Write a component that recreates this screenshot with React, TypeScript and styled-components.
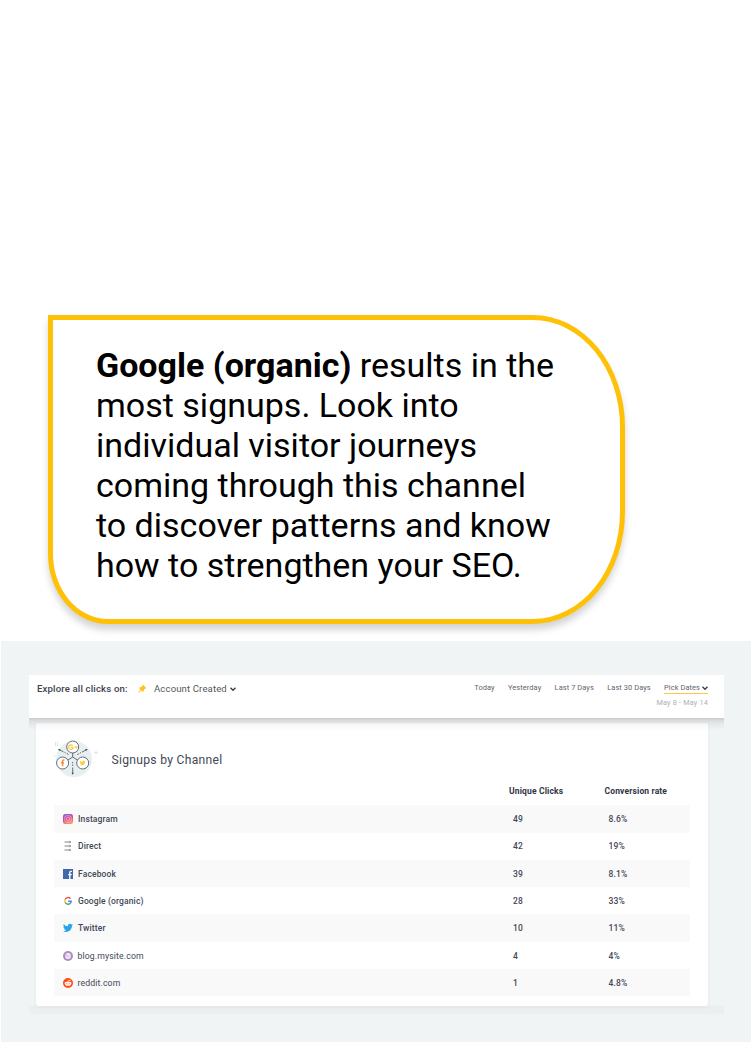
import React from "react";
import styled, { createGlobalStyle } from "styled-components";

const Global = createGlobalStyle`
  * { box-sizing: border-box; }
  body { margin: 0; background: #fff; font-family: Roboto, sans-serif; }
`;

const Page = styled.main`
  width: 751px;
  height: 1042px;
  overflow: hidden;
  padding-top: 315px;
`;

const Callout = styled.section`
  width: 577px;
  height: 309px;
  margin: 0 0 17px 47.5px;
  padding: 25px 0 0 43.5px;
  border: solid #ffc107;
  border-width: 5px;
  border-radius: 0 92px 92px 60px / 0 112px 112px 70px;
  background: #fff;
  box-shadow: 0 6px 7px rgba(0, 0, 0, 0.17);
`;

const Message = styled.p`
  margin: 0;
  color: #000;
  font-size: 34px;
  line-height: 40px;
  white-space: nowrap;
`;

const Line = styled.span`
  display: block;
`;

const Dashboard = styled.section`
  height: 401px;
  margin-left: 1px;
  padding: 34px 26.5px 0 28px;
  background: #f0f4f5;
`;

const Toolbar = styled.header`
  display: flex;
  justify-content: space-between;
  width: 695px;
  height: 43px;
  padding: 0 16px 0 8px;
  background: #fff;
`;

const Explore = styled.div`
  display: flex;
  align-items: center;
  height: 27px;
  color: #3c4350;
  font-size: 9.6px;
  white-space: nowrap;
`;

const ExploreLabel = styled.span`
  width: 100px;
  font-weight: 500;
  letter-spacing: 0.15px;
`;

const EventName = styled.span`
  width: 75.5px;
  margin-left: 7px;
  color: #555a62;
  font-size: 9.6px;
  letter-spacing: 0.11px;
`;

const Dates = styled.div`
  display: flex;
  flex-direction: column;
  align-items: flex-end;
  padding-top: 8px;
`;

const DateTabs = styled.nav`
  display: flex;
  gap: 13.3px;
`;

const DateTab = styled.span<{ $active?: boolean }>`
  display: flex;
  align-items: center;
  gap: 2px;
  height: 10px;
  box-shadow: ${(p) => (p.$active ? "0 1px 0 #ffc83d" : "none")};
  color: #62666e;
  font-size: 7.45px;
  line-height: 10px;
  letter-spacing: 0.08px;
  white-space: nowrap;
`;

const DateRange = styled.span`
  margin-top: 5px;
  color: #aeb0b4;
  font-size: 7.3px;
  line-height: 10px;
  letter-spacing: 0.18px;
`;

const Surface = styled.div`
  width: 695px;
  height: 296px;
  padding: 5px 0 0 7px;
  background: linear-gradient(#c9cccd 0, #dcdfe0 3px, #e8ebed 7px, #f0f4f5 12px, #f0f4f5 286px, #ebeef0 289px, #edf0f1 100%);
`;

const Card = styled.article`
  width: 672px;
  height: 282.5px;
  padding: 16px 18px 0;
  border-radius: 0 0 3px 3px;
  background: linear-gradient(#f1f1f1 0, #fafafa 3px, #fff 8px);
  box-shadow: 0 1px 3px rgba(60, 75, 85, 0.06);
`;

const CardHead = styled.div`
  display: flex;
  align-items: center;
  height: 42px;
`;

const CardTitle = styled.h2`
  margin: 0 0 0 12.5px;
  color: #414856;
  font-size: 12.1px;
  font-weight: 400;
  letter-spacing: 0.3px;
`;

const Row = styled.div<{ $striped?: boolean }>`
  display: grid;
  grid-template-columns: 10px 440px 95.5px 1fr;
  align-items: center;
  height: 27.28px;
  padding: 0.6px 0 0 9px;
  background: ${(p) => (p.$striped ? "#f9f9f9" : "transparent")};
  color: #414856;
  font-size: 8.5px;
  font-weight: 500;
  letter-spacing: 0.13px;
`;

const HeadRow = styled(Row)`
  height: 24.3px;
  padding-bottom: 5px;
  color: #2f3644;
  font-size: 8.5px;
  font-weight: 700;
  letter-spacing: 0.15px;
`;

const HeadCell = styled.span`
  margin-left: -4px;
`;

const Name = styled.span<{ $light?: boolean }>`
  padding-left: ${(p) => (p.$light ? 4.5 : 5)}px;
  font-weight: ${(p) => (p.$light ? 400 : 500)};
  font-size: ${(p) => (p.$light ? 8.7 : 8.5)}px;
`;

const Icon = styled.svg`
  display: block;
`;

const Chevron = ({ size = 6 }: { size?: number }) => (
  <Icon width={size} height={size} viewBox="0 0 6 6" fill="none" stroke="#343b49" strokeWidth="1.35">
    <path d="M.5 1.8 3 4.2 5.5 1.8" />
  </Icon>
);

const Pin = () => (
  <Icon width="10" height="10" viewBox="0 0 10 10" fill="#ffc21a">
    <path d="M5.7.5 9.5 4.3 8.3 4.5 6.7 6.1 6.3 8.3 4.5 6.5.5 9.5 3.5 5.5 1.7 3.7 3.9 3.3 5.5 1.7Z" />
  </Icon>
);

const birdPath =
  "M23 4.9a9 9 0 0 1-2.6.7 4.5 4.5 0 0 0 2-2.5 9 9 0 0 1-2.9 1.1 4.5 4.5 0 0 0-7.7 4.1A12.8 12.8 0 0 1 2.5 3.6a4.5 4.5 0 0 0 1.4 6 4.5 4.5 0 0 1-2-.6c0 2.2 1.5 4.1 3.6 4.5a4.5 4.5 0 0 1-2 .1 4.5 4.5 0 0 0 4.2 3.1A9 9 0 0 1 1 18.6a12.8 12.8 0 0 0 6.900 2c8.300 0 13.100-7 12.800-13.300A9 9 0 0 0 23 4.900Z";

const ChannelArt = () => (
  <Icon width="45" height="42" viewBox="0 0 45 42" fill="none">
    <circle cx="20" cy="20" r="18" fill="#e8eff1" />
    <path d="M1.500 3v4M3.500 3v4M42 11.500v4M40 13.500h4M39.500 23.500h1.500M0 17h2" stroke="#d9e0e5" strokeWidth=".8" />
    <g stroke="#555e68" strokeWidth=".9">
      <path d="M18.700 13.500v4.500M18.700 18l-5.500 3.500M18.700 18l5.500 3.500" />
      <path d="M5 10.500 9.500 12.900M10.500 13.400l1.200.6M12.700 14.500l1.800 1M32.500 10.700 28 13.100M27 13.600l-1.200.6M24.800 14.700l-1.500.9M18.700 34.500v-6M18.700 27v-1.500M18.700 24.300v-1.300" />
      <circle cx="18.700" cy="8" r="6" fill="#fff" />
      <circle cx="8.600" cy="24" r="6" fill="#fff" />
      <circle cx="28.700" cy="24" r="6" fill="#fff" />
    </g>
    <path d="m4 9.900 2.500.1-1.100 1.900ZM33.700 9.900l-2.500.1 1.100 1.900ZM18.700 35.800l-1.200-2.100h2.400Z" fill="#414b58" />
    <path d="M18.700 6.600a2.300 2.300 0 1 0 .1 3V8.300h-1.800M20.700 8.200h2.800M22.100 6.900v2.700" stroke="#ffc83d" strokeWidth="1.200" />
    <path d="M10.400 21.100h-.8q-1 0-1 1v5.200M7 23.700h3" stroke="#ff8b38" strokeWidth="1.500" />
    <path d={birdPath} transform="translate(25.400 20.800) scale(.27)" fill="#ffc83d" />
  </Icon>
);

const Instagram = () => (
  <Icon width="10" height="10" viewBox="0 0 10 10">
    <defs>
      <linearGradient id="instagram" x1=".2" y1="0" x2=".6" y2="1">
        <stop stopColor="#7d5fd6" />
        <stop offset=".5" stopColor="#e04590" />
        <stop offset="1" stopColor="#fa9657" />
      </linearGradient>
    </defs>
    <rect width="10" height="10" rx="2.200" fill="url(#instagram)" />
    <g fill="none" stroke="#fff" strokeOpacity=".7" strokeWidth=".65">
      <rect x="1.800" y="1.800" width="6.400" height="6.400" rx="1.700" />
      <circle cx="5" cy="5" r="1.600" />
    </g>
    <circle cx="6.900" cy="3.100" r=".4" fill="#fff" />
  </Icon>
);

const Direct = () => (
  <Icon width="10" height="10" viewBox="0 0 10 10" fill="none" stroke="#60656d" strokeWidth=".8">
    <path d="M1.500 1h6M1.500 5h6M1.500 9h6M6.500.2l1.200.8-1.200.8M6.500 4.200l1.200.8-1.200.8M6.500 8.200l1.200.8-1.200.8" />
  </Icon>
);

const Facebook = () => (
  <Icon width="10" height="10" viewBox="0 0 10 10">
    <path fill="#4267ab" d="M0 0h10v10H0z" />
    <path d="M9 2.300H7.900q-1.100 0-1.100 1.200V10M5.200 5.600h3.500" fill="none" stroke="#fff" strokeWidth="1.350" />
  </Icon>
);

const Google = () => (
  <Icon width="10" height="10" viewBox="0 0 10 10" fill="none" strokeWidth="1.400">
    <path d="M7.500 2.600A3.200 3.200 0 0 0 2.200 3.500" stroke="#ea4d3f" />
    <path d="M2.200 3.500a3.200 3.200 0 0 0 0 3" stroke="#f8bd2c" />
    <path d="M2.200 6.500a3.200 3.200 0 0 0 4.700 1.100" stroke="#42a963" />
    <path d="M6.900 7.600A3.200 3.200 0 0 0 8.200 5.200H5.100" stroke="#4b88e8" />
  </Icon>
);

const Twitter = () => (
  <Icon width="10" height="10" viewBox="1 1 22 22" fill="#25a5ed">
    <path d={birdPath} />
  </Icon>
);

const Blog = () => (
  <Icon width="10" height="10" viewBox="0 0 10 10">
    <circle cx="5" cy="5" r="5" fill="#ad8cc3" />
    <rect x="2.300" y="2" width="5.400" height="6" rx="2.200" fill="#f2ebf5" />
    <path d="M3.500 3.200v1.600h1.600M4.800 6.200l1.600-1.300" fill="none" stroke="#b79bc9" strokeWidth=".6" />
  </Icon>
);

const Reddit = () => (
  <Icon width="10" height="10" viewBox="0 0 10 10">
    <circle cx="5" cy="5" r="5" fill="#ff4b13" />
    <path d="m5 3.700.4-1.600 1.500.3" fill="none" stroke="#fff" strokeWidth=".45" />
    <circle cx="7" cy="2.400" r=".55" fill="#fff" />
    <circle cx="2.200" cy="4.900" r=".75" fill="#fff" />
    <circle cx="7.800" cy="4.900" r=".75" fill="#fff" />
    <ellipse cx="5" cy="5.700" rx="3" ry="2.200" fill="#fff" />
    <circle cx="3.900" cy="5.200" r=".5" fill="#ff4b13" />
    <circle cx="6.100" cy="5.200" r=".5" fill="#ff4b13" />
    <path d="M3.800 6.700q1.200.8 2.400 0" fill="none" stroke="#ff4b13" strokeWidth=".4" />
  </Icon>
);

const channels = [
  { name: "Instagram", clicks: "49", rate: "8.6%", Logo: Instagram },
  { name: "Direct", clicks: "42", rate: "19%", Logo: Direct },
  { name: "Facebook", clicks: "39", rate: "8.1%", Logo: Facebook },
  { name: "Google (organic)", clicks: "28", rate: "33%", Logo: Google },
  { name: "Twitter", clicks: "10", rate: "11%", Logo: Twitter },
  { name: "blog.mysite.com", clicks: "4", rate: "4%", Logo: Blog, light: true },
  { name: "reddit.com", clicks: "1", rate: "4.8%", Logo: Reddit, light: true },
];

export default function App() {
  return (
    <Page>
      <Global />
      <Callout>
        <Message>
          <Line><b>Google (organic)</b> results in the</Line>
          <Line>most signups. Look into</Line>
          <Line>individual visitor journeys</Line>
          <Line>coming through this channel</Line>
          <Line>to discover patterns and know</Line>
          <Line>how to strengthen your SEO.</Line>
        </Message>
      </Callout>
      <Dashboard>
        <Toolbar>
          <Explore>
            <ExploreLabel>Explore all clicks on:</ExploreLabel>
            <Pin />
            <EventName>Account Created</EventName>
            <Chevron />
          </Explore>
          <Dates>
            <DateTabs>
              <DateTab>Today</DateTab>
              <DateTab>Yesterday</DateTab>
              <DateTab>Last 7 Days</DateTab>
              <DateTab>Last 30 Days</DateTab>
              <DateTab $active>Pick Dates <Chevron /></DateTab>
            </DateTabs>
            <DateRange>May 8 - May 14</DateRange>
          </Dates>
        </Toolbar>
        <Surface>
          <Card>
            <CardHead>
              <ChannelArt />
              <CardTitle>Signups by Channel</CardTitle>
            </CardHead>
            <HeadRow>
              <span />
              <span />
              <HeadCell>Unique Clicks</HeadCell>
              <HeadCell>Conversion rate</HeadCell>
            </HeadRow>
            {channels.map(({ name, clicks, rate, Logo, light }, i) => (
              <Row key={name} $striped={i % 2 === 0}>
                <Logo />
                <Name $light={light}>{name}</Name>
                <span>{clicks}</span>
                <span>{rate}</span>
              </Row>
            ))}
          </Card>
        </Surface>
      </Dashboard>
    </Page>
  );
}
